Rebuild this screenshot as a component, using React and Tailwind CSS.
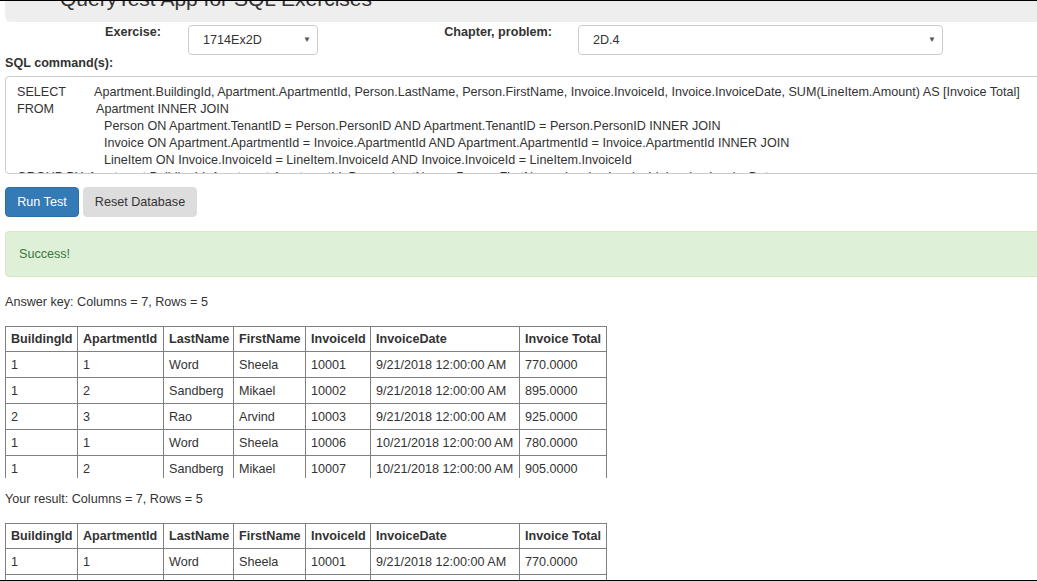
import React from 'react';

const columns = ['BuildingId', 'ApartmentId', 'LastName', 'FirstName', 'InvoiceId', 'InvoiceDate', 'Invoice Total'];
const widths = ['w-[72px]', 'w-[86px]', 'w-[70px]', 'w-[72px]', 'w-[65px]', 'w-[149px]', 'w-[87px]'];

const rows = [
  ['1', '1', 'Word', 'Sheela', '10001', '9/21/2018 12:00:00 AM', '770.0000'],
  ['1', '2', 'Sandberg', 'Mikael', '10002', '9/21/2018 12:00:00 AM', '895.0000'],
  ['2', '3', 'Rao', 'Arvind', '10003', '9/21/2018 12:00:00 AM', '925.0000'],
  ['1', '1', 'Word', 'Sheela', '10006', '10/21/2018 12:00:00 AM', '780.0000'],
  ['1', '2', 'Sandberg', 'Mikael', '10007', '10/21/2018 12:00:00 AM', '905.0000'],
];

const ResultTable = ({ height }) => (
  <div className={`${height} overflow-hidden`}>
    <table className="table-fixed border-collapse w-[601px]">
      <colgroup>
        {widths.map((w, i) => (
          <col key={i} className={w} />
        ))}
      </colgroup>
      <thead>
        <tr>
          {columns.map((c) => (
            <th key={c} className="h-[25px] border border-[#808080] px-[5px] text-left font-bold leading-[16px] whitespace-nowrap">
              {c}
            </th>
          ))}
        </tr>
      </thead>
      <tbody>
        {rows.map((r, i) => (
          <tr key={i}>
            {r.map((v, j) => (
              <td key={j} className="h-[26px] border border-[#808080] px-[5px] leading-[16px] whitespace-nowrap">
                {v}
              </td>
            ))}
          </tr>
        ))}
      </tbody>
    </table>
  </div>
);

const Select = ({ value, width }) => (
  <div className={`${width} mt-[3px] h-[30px] flex items-center justify-between border border-[#ccc] rounded-[4px] pl-[14px] pr-[6px] bg-white`}>
    <span>{value}</span>
    <span className="text-[8px] text-[#555]">▼</span>
  </div>
);

export default function App() {
  return (
    <div
      className="h-[581px] w-[1037px] overflow-hidden border-t border-b border-black bg-white text-[12.6px] text-[#333]"
      style={{ fontFamily: '"Liberation Sans", Arial, sans-serif' }}
    >
      <div className="w-[1080px] pl-[5px]">
        {/* Jumbotron header, scrolled partly off the top */}
        <div className="h-[21px] overflow-hidden bg-[#eee] rounded-bl-[6px]">
          <h1 className="ml-[55px] mt-[-14px] text-[21px] leading-[24px] font-normal">
            QueryTest App for SQL Exercises
          </h1>
        </div>

        {/* Exercise / chapter row */}
        <div className="flex items-start h-[33px]">
          <div className="w-[156px] text-right font-bold leading-[20px]">Exercise:</div>
          <div className="ml-[27px]">
            <Select value="1714Ex2D" width="w-[130px]" />
          </div>
          <div className="w-[234px] text-right font-bold leading-[20px]">Chapter, problem:</div>
          <div className="ml-[26px]">
            <Select value="2D.4" width="w-[365px]" />
          </div>
        </div>

        <div className="font-bold leading-[18px] mt-[-1px]">SQL command(s):</div>

        {/* SQL textarea */}
        <div className="mt-[4px] h-[98px] overflow-hidden border border-[#ccc] rounded-l-[4px] pl-[11px] pt-[7px] leading-[17px] whitespace-pre">
          <div>
            <span className="inline-block w-[77px]">SELECT</span>
            Apartment.BuildingId, Apartment.ApartmentId, Person.LastName, Person.FirstName, Invoice.InvoiceId, Invoice.InvoiceDate, SUM(LineItem.Amount) AS [Invoice Total]
          </div>
          <div>
            <span className="inline-block w-[79px]">FROM</span>
            Apartment INNER JOIN
          </div>
          <div className="pl-[87px]">Person ON Apartment.TenantID = Person.PersonID AND Apartment.TenantID = Person.PersonID INNER JOIN</div>
          <div className="pl-[87px]">Invoice ON Apartment.ApartmentId = Invoice.ApartmentId AND Apartment.ApartmentId = Invoice.ApartmentId INNER JOIN</div>
          <div className="pl-[87px]">LineItem ON Invoice.InvoiceId = LineItem.InvoiceId AND Invoice.InvoiceId = LineItem.InvoiceId</div>
          <div>
            <span className="inline-block w-[71px]">GROUP BY</span>
            Apartment.BuildingId, Apartment.ApartmentId, Person.LastName, Person.FirstName, Invoice.InvoiceId, Invoice.InvoiceDate
          </div>
        </div>

        {/* Buttons */}
        <div className="mt-[13px] flex gap-[4px]">
          <button className="h-[30px] w-[74px] rounded-[4px] border border-[#2e6da4] bg-[#337ab7] text-white">
            Run Test
          </button>
          <button className="h-[30px] w-[114px] rounded-[4px] border border-[#ddd] bg-[#ddd] text-[#333]">
            Reset Database
          </button>
        </div>

        {/* Alert */}
        <div className="mt-[14px] h-[46px] flex items-center pl-[13px] border border-[#d6e9c6] bg-[#dff0d8] text-[#3c763d] rounded-l-[4px]">
          Success!
        </div>

        <div className="mt-[15px] leading-[20px]">Answer key: Columns = 7, Rows = 5</div>
        <div className="mt-[14px]">
          <ResultTable height="h-[152px]" />
        </div>

        <div className="mt-[11px] leading-[20px]">Your result: Columns = 7, Rows = 5</div>
        <div className="mt-[14px]">
          <ResultTable height="h-[60px]" />
        </div>
      </div>
    </div>
  );
}
